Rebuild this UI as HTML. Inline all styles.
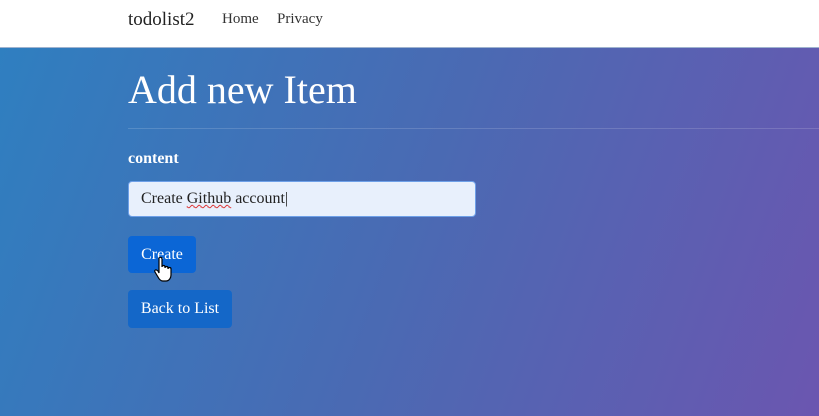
<!DOCTYPE html>
<html><head><style>
body{margin:0;width:819px;height:416px;overflow:hidden;font-family:"Liberation Serif",serif;position:relative;}
.nav{position:absolute;left:0;top:0;width:819px;height:47px;background:#fff;border-bottom:1px solid #9fb3cf;}
.main{position:absolute;left:0;top:48px;width:819px;height:368px;background:linear-gradient(110deg,#2f7fc0 0%,#4a6ab3 50%,#6b56b0 100%);}
.brand{position:absolute;left:128px;top:9px;font-size:19px;color:#222;}
.l{position:absolute;top:11px;font-size:15px;color:#333;}
h1{position:absolute;left:128px;top:66px;margin:0;font-weight:normal;font-size:40px;color:#fff;}
.hr{position:absolute;left:128px;top:128px;width:691px;height:1px;background:rgba(255,255,255,0.15);}
.lab{position:absolute;left:128px;top:150px;font-size:16px;font-weight:bold;color:#fff;}
.inp{position:absolute;left:128px;top:181px;width:348px;height:36px;background:#e8f0fc;border:1px solid #6ea0e8;border-radius:4px;box-sizing:border-box;font-size:16px;color:#222;padding:8px 12px;}
.btn{position:absolute;left:128px;background:#0b66d6;color:#fff;font-size:16px;border-radius:4px;text-align:center;}
</style></head><body>
<div class="nav"><span class="brand">todolist2</span><span class="l" style="left:222px">Home</span><span class="l" style="left:277px">Privacy</span></div>
<div class="main"></div>
<h1>Add new Item</h1>
<div class="hr"></div>
<div class="lab">content</div>
<div class="inp">Create <span style="text-decoration:underline wavy #d33;text-decoration-thickness:1px">Github</span> account|</div>
<div class="btn" style="top:236px;width:68px;height:37px;line-height:37px">Create</div>
<div class="btn" style="top:290px;width:104px;height:38px;line-height:38px;background:#1467c8">Back to List</div>
<svg style="position:absolute;left:154px;top:256px" width="18" height="26" viewBox="0 0 18 26"><path d="M5 2c1-1 3-1 3 1v8c0-2 3-2 3 0v1c0-2 3-2 3 0v1c0-2 3-2 3 0v6c0 3-2 6-5 6H9c-2 0-4-2-5-4l-3-5c-1-2 1-3 3-1l1 2z" fill="#fff" stroke="#000" stroke-width="1.2"/></svg>
</body></html>
